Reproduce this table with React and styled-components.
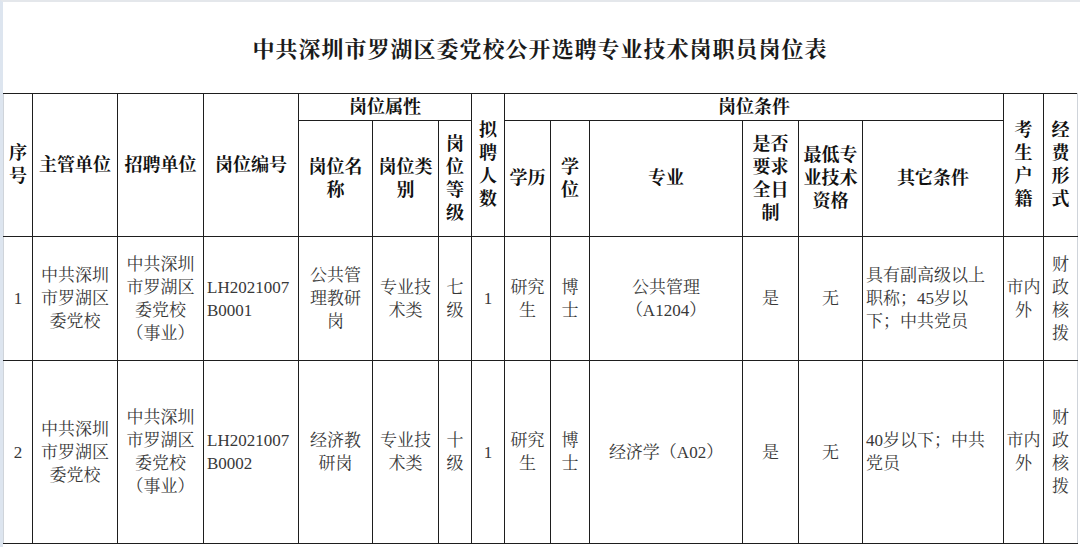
import React from 'react';
import styled, { createGlobalStyle } from 'styled-components';

const GlobalStyle = createGlobalStyle`
  html, body {
    margin: 0;
    padding: 0;
    background: #ffffff;
  }
  body {
    font-family: "Liberation Serif", "Noto Serif CJK SC", "Noto Sans CJK SC", serif;
  }
`;

const Sheet = styled.div`
  width: 1080px;
  height: 547px;
  box-sizing: border-box;
  border-left: 3px solid #dde5ef;
  border-top: 2px solid #e4e7eb;
  background: #ffffff;
  overflow: hidden;
`;

const TitleBar = styled.div`
  height: 91px;
  display: flex;
  align-items: center;
  justify-content: center;
  box-sizing: border-box;
  padding-right: 3px;
`;

const Title = styled.h1`
  margin: 0;
  font-size: 22px;
  font-weight: 700;
  letter-spacing: 1px;
  color: #1a1a1a;
`;

const Grid = styled.table`
  width: 1074px;
  table-layout: fixed;
  border-collapse: collapse;
`;

const Row = styled.tr`
  height: ${(p) => p.$h}px;
`;

const Cell = styled.td`
  border: 1px solid #1e1e1e;
  ${(p) => p.$edge === 'left' && 'border-left-color: #cfd4da;'}
  ${(p) => p.$edge === 'right' && 'border-right-color: #cfd4da;'}
  padding: ${(p) => (p.$align === 'left' ? '0 0 0 3px' : '0')};
  vertical-align: middle;
  text-align: ${(p) => p.$align || 'center'};
  line-height: 23px;
  white-space: nowrap;
  overflow: hidden;
`;

const HeadCell = styled(Cell).attrs({ as: 'th' })`
  font-size: 18px;
  font-weight: 700;
  color: #111111;
`;

const BodyCell = styled(Cell)`
  font-size: 17px;
  font-weight: 400;
  color: #383838;
`;

const widths = [29, 85, 86, 95, 74, 66, 33, 33, 46, 39, 153, 56, 64, 141, 40, 34];

const Lines = ({ text }) =>
  text.split('/').map((line, i, all) => (
    <React.Fragment key={i}>
      {line}
      {i < all.length - 1 && <br />}
    </React.Fragment>
  ));

const rows = [
  {
    h: 124,
    cells: [
      '1',
      '中共深圳/市罗湖区/委党校',
      '中共深圳/市罗湖区/委党校/（事业）',
      ['LH2021007/B0001', 'left'],
      '公共管/理教研/岗',
      '专业技/术类',
      '七/级',
      '1',
      '研究/生',
      '博/士',
      '公共管理/（A1204）',
      '是',
      '无',
      ['具有副高级以上/职称；45岁以/下；中共党员', 'left'],
      '市内/外',
      '财/政/核/拨',
    ],
  },
  {
    h: 183,
    cells: [
      '2',
      '中共深圳/市罗湖区/委党校',
      '中共深圳/市罗湖区/委党校/（事业）',
      ['LH2021007/B0002', 'left'],
      '经济教/研岗',
      '专业技/术类',
      '十/级',
      '1',
      '研究/生',
      '博/士',
      '经济学（A02）',
      '是',
      '无',
      ['40岁以下；中共/党员', 'left'],
      '市内/外',
      '财/政/核/拨',
    ],
  },
];

const App = () => (
  <>
    <GlobalStyle />
    <Sheet>
      <TitleBar>
        <Title>中共深圳市罗湖区委党校公开选聘专业技术岗职员岗位表</Title>
      </TitleBar>
      <Grid>
        <colgroup>
          {widths.map((w, i) => (
            <col key={i} style={{ width: w }} />
          ))}
        </colgroup>
        <thead>
          <Row $h={27}>
            <HeadCell rowSpan={2} $edge="left"><Lines text="序/号" /></HeadCell>
            <HeadCell rowSpan={2}>主管单位</HeadCell>
            <HeadCell rowSpan={2}>招聘单位</HeadCell>
            <HeadCell rowSpan={2}>岗位编号</HeadCell>
            <HeadCell colSpan={3}>岗位属性</HeadCell>
            <HeadCell rowSpan={2}><Lines text="拟/聘/人/数" /></HeadCell>
            <HeadCell colSpan={6}>岗位条件</HeadCell>
            <HeadCell rowSpan={2}><Lines text="考/生/户/籍" /></HeadCell>
            <HeadCell rowSpan={2} $edge="right"><Lines text="经/费/形/式" /></HeadCell>
          </Row>
          <Row $h={116}>
            <HeadCell><Lines text="岗位名/称" /></HeadCell>
            <HeadCell><Lines text="岗位类/别" /></HeadCell>
            <HeadCell><Lines text="岗/位/等/级" /></HeadCell>
            <HeadCell>学历</HeadCell>
            <HeadCell><Lines text="学/位" /></HeadCell>
            <HeadCell>专业</HeadCell>
            <HeadCell><Lines text="是否/要求/全日/制" /></HeadCell>
            <HeadCell><Lines text="最低专/业技术/资格" /></HeadCell>
            <HeadCell>其它条件</HeadCell>
          </Row>
        </thead>
        <tbody>
          {rows.map((row, r) => (
            <Row key={r} $h={row.h}>
              {row.cells.map((c, i) => {
                const [text, align] = Array.isArray(c) ? c : [c, 'center'];
                const edge = i === 0 ? 'left' : i === row.cells.length - 1 ? 'right' : undefined;
                return (
                  <BodyCell key={i} $align={align} $edge={edge}>
                    <Lines text={text} />
                  </BodyCell>
                );
              })}
            </Row>
          ))}
        </tbody>
      </Grid>
    </Sheet>
  </>
);

export default App;
